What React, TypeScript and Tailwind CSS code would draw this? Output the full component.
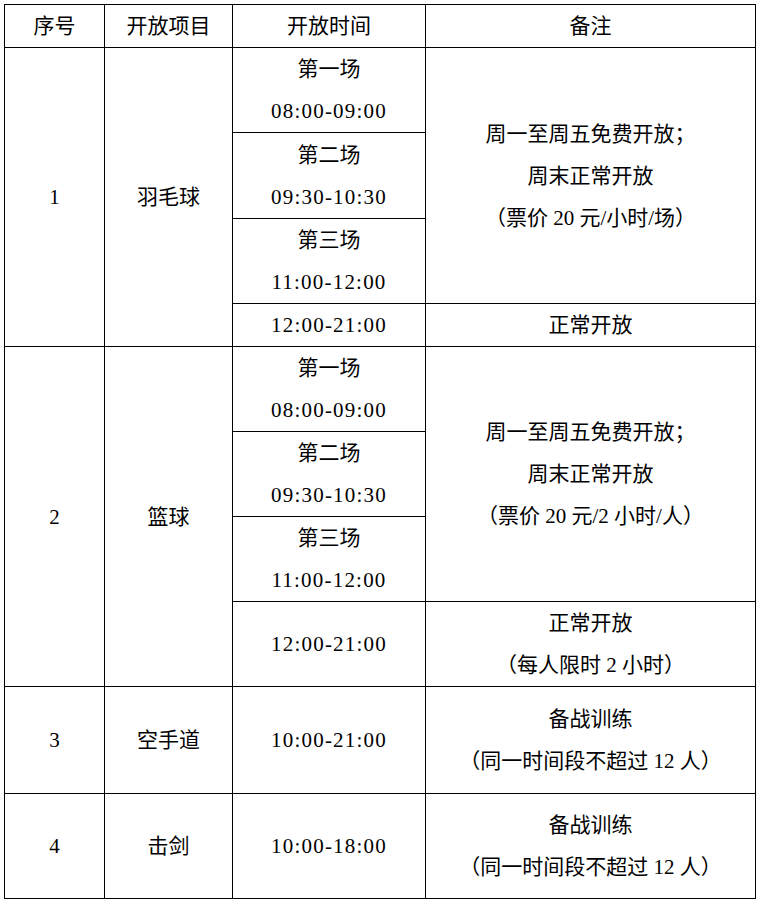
import React from 'react';

type Cell = {
  lines: string[];
  span?: string;
};

const cell = (lines: string[], span = ''): Cell => ({ lines, span });

// rows: header 42, sub-rows 84/85, short sub-row 42, last two rows 106/104
const cells: Cell[] = [
  cell(['序号']),
  cell(['开放项目']),
  cell(['开放时间']),
  cell(['备注']),

  cell(['1'], 'row-span-4'),
  cell(['羽毛球'], 'row-span-4'),
  cell(['第一场', '08:00-09:00']),
  cell(['周一至周五免费开放；', '周末正常开放', '（票价 20 元/小时/场）'], 'row-span-3'),
  cell(['第二场', '09:30-10:30']),
  cell(['第三场', '11:00-12:00']),
  cell(['12:00-21:00']),
  cell(['正常开放']),

  cell(['2'], 'row-span-4'),
  cell(['篮球'], 'row-span-4'),
  cell(['第一场', '08:00-09:00']),
  cell(['周一至周五免费开放；', '周末正常开放', '（票价 20 元/2 小时/人）'], 'row-span-3'),
  cell(['第二场', '09:30-10:30']),
  cell(['第三场', '11:00-12:00']),
  cell(['12:00-21:00']),
  cell(['正常开放', '（每人限时 2 小时）']),

  cell(['3']),
  cell(['空手道']),
  cell(['10:00-21:00']),
  cell(['备战训练', '（同一时间段不超过 12 人）']),

  cell(['4']),
  cell(['击剑']),
  cell(['10:00-18:00']),
  cell(['备战训练', '（同一时间段不超过 12 人）']),
];

export default function App() {
  return (
    <div className="min-h-[904px] w-[762px] bg-white pl-1 pt-1 font-['Liberation_Serif','Noto_Sans_CJK_SC',serif] text-[21px] leading-[42px] text-black [text-spacing-trim:space-all]">
      <div className="grid w-[752px] grid-cols-[99px_127px_192px_329px] grid-rows-[42px_84px_85px_84px_42px_84px_84px_84px_84px_106px_104px] gap-px border border-black bg-black">
        {cells.map((c, i) => (
          <div key={i} className={`flex flex-col items-center justify-center bg-white ${c.span}`}>
            {c.lines.map((line, j) => (
              <span key={j} className={/\d\d:\d\d/.test(line) ? 'tracking-[1.2px]' : ''}>
                {line}
              </span>
            ))}
          </div>
        ))}
      </div>
    </div>
  );
}
